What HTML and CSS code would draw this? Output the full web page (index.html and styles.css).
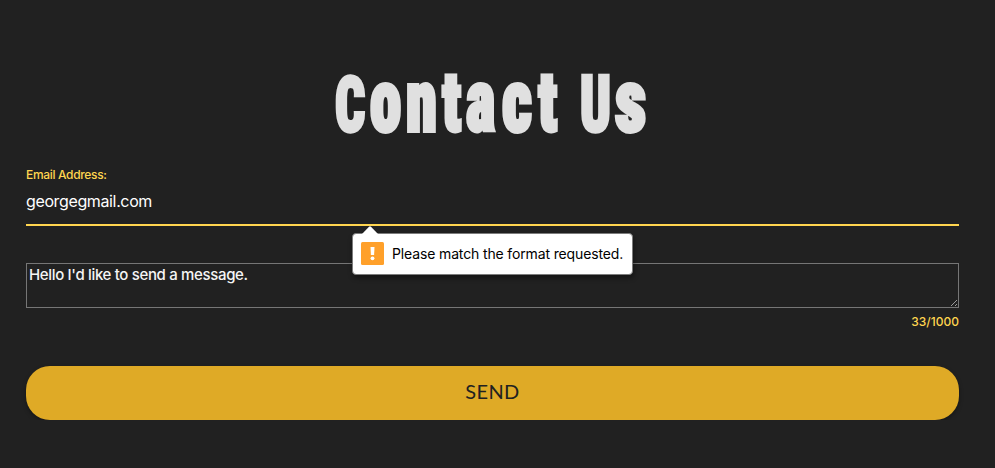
FILE: index.html
```
<!DOCTYPE html>
<html lang="en">
<head>
<meta charset="utf-8">
<title>Contact Us</title>
<link rel="stylesheet" href="styles.css">
</head>
<body>
<main class="contact">
  <h1 class="title"><span class="l l-cap-c">C</span><span class="l l-o">o</span><span class="l l-n">n</span><span class="l l-t">t</span><span class="l l-a">a</span><span class="l l-c">c</span><span class="l l-t2">t</span> <span class="l l-u">U</span><span class="l l-s">s</span></h1>
  <form class="form" novalidate>
    <div class="field">
      <label class="label" for="email">Email Address:</label>
      <input class="input" id="email" type="text" value="georgegmail.com">
      <div class="bubble" role="alert">
        <svg class="bubble-arrow" width="18" height="9" viewBox="0 0 18 9"><path d="M0 9 8 .7Q9 0 10 .7L18 9Z" fill="#fff"/></svg>
        <svg class="bubble-icon" width="23" height="23" viewBox="0 0 23 23"><rect width="23" height="23" rx="1.5" fill="#ffa02a"/><path d="M9.5 5h4l-.4 8h-3.2z" fill="#fff"/><circle cx="11.5" cy="16.3" r="1.9" fill="#fff"/></svg>
        <span class="bubble-text">Please match the format requested.</span>
      </div>
    </div>
    <div class="message">
      <textarea class="textarea" aria-label="Message">Hello I'd like to send a message.</textarea>
      <svg class="grip" width="8" height="8" viewBox="0 0 8 8"><path d="M1 7 7 1M5 7 7 5" stroke="#bbb" stroke-width=".8" fill="none"/></svg>
    </div>
    <div class="counter">33/1000</div>
    <button class="send" type="button">SEND</button>
  </form>
</main>
</body>
</html>
```
FILE: styles.css
```
* { box-sizing: border-box; }
body {
  margin: 0;
  background: #212121;
  color: #fff;
  font-family: Inter, "Liberation Sans", sans-serif;
}
.contact { padding: 54px 36px 0 26px; }
.title {
  margin: 0;
  height: 113px;
  padding-left: 309px;
  font: 900 80px/100px Roboto, sans-serif;
  font-stretch: 75%;
  color: #e0e0e0;
  white-space: nowrap;
  -webkit-text-stroke: 3.6px #e0e0e0;
}
.l { display: inline-block; transform-origin: 0 77px; }
.l-cap-c { width: 35px; transform: scale(.66, .955); }
.l-o { width: 36px; transform: scale(.79, 1.08); }
.l-n { width: 36px; transform: scale(.78, 1.08); }
.l-t { width: 24px; transform: scale(.77, 1.05); }
.l-a { width: 36px; transform: scale(.78, 1.08); }
.l-c { width: 36px; transform: scale(.82, 1.08); }
.l-t2 { width: 24px; transform: scale(.77, 1.05); }
.l-u { width: 35px; transform: scale(.67, .965); }
.l-s { width: 32px; transform: scale(.86, 1.08); }

.form { display: flex; flex-direction: column; }
.field { position: relative; display: flex; flex-direction: column; }
.label {
  height: 16px;
  font-size: 12px;
  font-weight: 500;
  line-height: 16px;
  letter-spacing: -.33px;
  color: #ffd54f;
}
.input {
  height: 43px;
  padding: 0 0 5px;
  border: 0;
  border-bottom: 2px solid #ffd54f;
  background: none;
  color: #fff;
  font: 16px/24px Inter, sans-serif;
  letter-spacing: -.37px;
  outline: none;
}
.bubble {
  position: absolute;
  z-index: 1;
  left: 326px;
  top: 66px;
  display: flex;
  align-items: center;
  width: 281px;
  height: 42px;
  padding: 0 0 1px 8px;
  border: 1px solid #7c7c7c;
  border-radius: 4px;
  background: #fff;
  color: #000;
  box-shadow: 1px 3px 5px rgba(0, 0, 0, .4);
}
.bubble-arrow { position: absolute; left: 8px; top: -8px; }
.bubble-text {
  margin-left: 8px;
  padding-bottom: 1px;
  font-size: 14px;
  letter-spacing: -.14px;
  white-space: nowrap;
}
.message { position: relative; margin-top: 37px; height: 45px; }
.textarea {
  display: block;
  width: 100%;
  height: 45px;
  padding: 2px;
  border: 1px solid #767676;
  background: none;
  color: #f5f5f5;
  font: 500 15px/18px Inter, sans-serif;
  letter-spacing: -.34px;
  resize: none;
  overflow: hidden;
  outline: none;
}
.grip { position: absolute; right: 1px; bottom: 1px; }
.counter {
  margin-top: 6px;
  height: 16px;
  font-size: 12px;
  font-weight: 500;
  line-height: 16px;
  text-align: right;
  color: #ffd54f;
}
.send {
  height: 54px;
  margin-top: 36px;
  padding: 0 0 5px;
  border: 0;
  border-radius: 24px;
  background: #dfaa26;
  color: #212121;
  font: 20px/24px Lato, sans-serif;
  letter-spacing: .4px;
  box-shadow: 0 2px 4px rgba(0, 0, 0, .35);
}
```
